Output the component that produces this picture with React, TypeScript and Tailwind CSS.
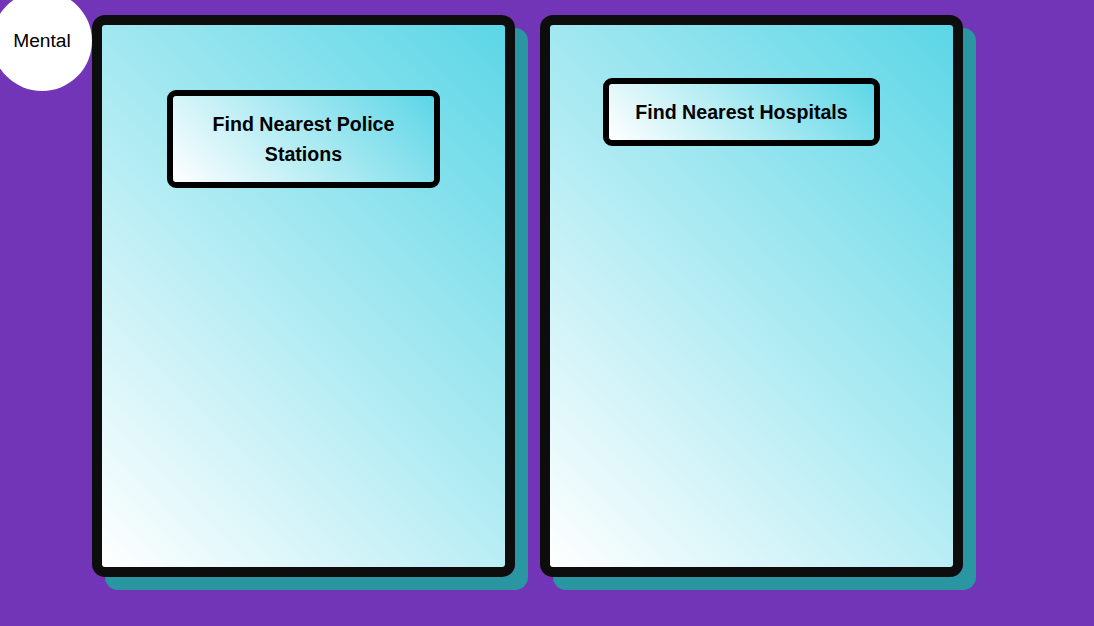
import React from 'react';

const cards = [
  { id: 'police', label: 'Find Nearest Police Stations', btn: 'mt-[65px] w-[273px] py-[13px]' },
  { id: 'hospitals', label: 'Find Nearest Hospitals', btn: 'mt-[53px] mr-[20px] px-[26px] py-[13px]' },
];

export default function App() {
  return (
    <div className="relative min-h-screen w-full overflow-hidden bg-[#7335b7] font-['Liberation_Sans',Arial,sans-serif]">
      {/* Mental badge */}
      <div className="absolute -left-[8px] -top-[9px] flex h-[100px] w-[100px] items-center justify-center rounded-full bg-white">
        <span className="text-[19.2px] text-black">Mental</span>
      </div>

      {/* Cards */}
      <div className="flex gap-[25px] pl-[92px] pt-[15px]">
        {cards.map((card) => (
          <div
            key={card.id}
            className="flex h-[562px] w-[423px] flex-col items-center rounded-[13px] border-[10px] border-[#0d0d0d] bg-[linear-gradient(45deg,#ffffff,#5cd6e6)] shadow-[13px_13px_0_0_#2a96a1]"
          >
            <button
              className={`rounded-[9px] border-[6px] border-black bg-[linear-gradient(45deg,#ffffff,#5cd6e6)] text-center text-[19.6px] font-bold leading-[30px] text-black ${card.btn}`}
            >
              {card.id === 'police' ? (
                <>
                  Find Nearest Police
                  <br />
                  Stations
                </>
              ) : (
                card.label
              )}
            </button>
          </div>
        ))}
      </div>
    </div>
  );
}
